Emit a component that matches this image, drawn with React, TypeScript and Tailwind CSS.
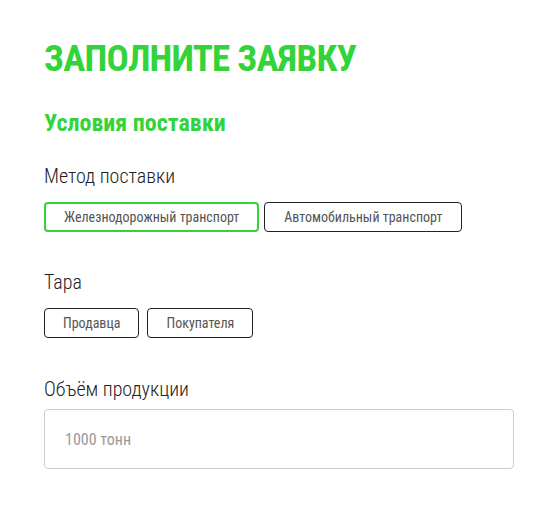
const Choice = ({
  label,
  active,
  narrow,
}: {
  label: string;
  active?: boolean;
  narrow?: boolean;
}) => (
  <button
    className={
      "h-[30px] rounded-[4px] bg-white text-[14px] font-normal leading-none text-[#555] " +
      (active
        ? "border-2 border-[#33d33a] px-[18px]"
        : narrow
          ? "border border-[#222] px-[18px]"
          : "border border-[#222] px-[19px]")
    }
  >
    {label}
  </button>
);

export default function App() {
  return (
    <div
      className="min-h-screen bg-white px-[44px] pt-[39px] text-[#222]"
      style={{ fontFamily: "'Roboto Condensed', Roboto, sans-serif" }}
    >
      <h1 className="text-[37px] leading-[40px] font-bold text-[#33d33a] tracking-[-0.75px]">
        ЗАПОЛНИТЕ ЗАЯВКУ
      </h1>
      <h2 className="mt-[30px] text-[24px] leading-[28px] font-bold text-[#33d33a]">
        Условия поставки
      </h2>

      <div className="mt-[27px]">
        <p className="text-[20px] leading-[24px] font-light">Метод поставки</p>
        <div className="mt-[14px] flex gap-[5px]">
          <Choice label="Железнодорожный транспорт" active />
          <Choice label="Автомобильный транспорт" />
        </div>
      </div>

      <div className="mt-[38px]">
        <p className="text-[20px] leading-[24px] font-light">Тара</p>
        <div className="mt-[14px] flex gap-[8px]">
          <Choice label="Продавца" narrow />
          <Choice label="Покупателя" narrow />
        </div>
      </div>

      <div className="mt-[39px]">
        <p className="text-[20px] leading-[24px] font-light">Объём продукции</p>
        <input
          className="mt-[8px] block h-[60px] w-[470px] rounded-[4px] border border-[#ccc] px-[20px] text-[16px] text-[#222] placeholder:text-[#999] outline-none"
          placeholder="1000 тонн"
        />
      </div>
    </div>
  );
}
